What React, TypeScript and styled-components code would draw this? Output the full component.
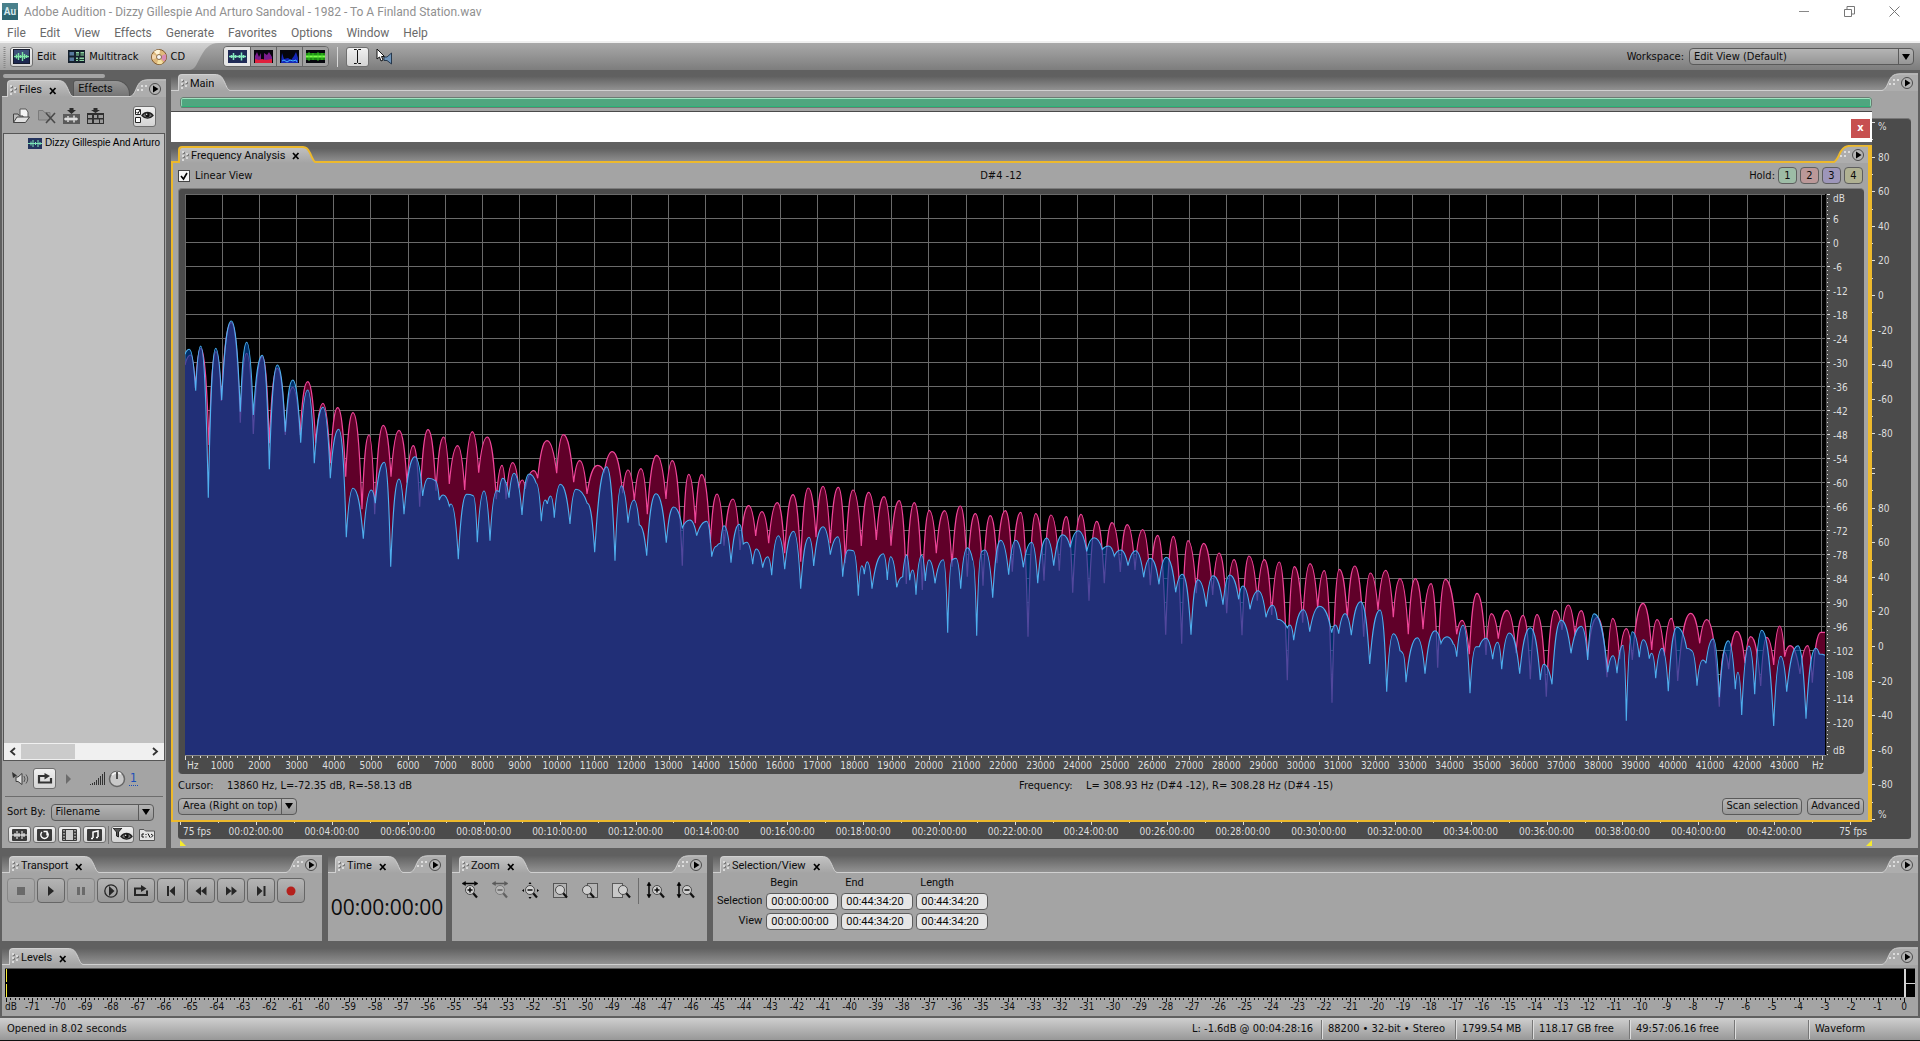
import React from 'react';
import styled, { createGlobalStyle, css } from 'styled-components';

const UI_FONT = '"DejaVu Sans Condensed", "DejaVu Sans", "Noto Sans", sans-serif';
const SYSTEM_FONT = 'Roboto, "Noto Sans", sans-serif';
const LIST_FONT = '"Liberation Sans", Arial, sans-serif';
const CLOCK_FONT = '"Open Sans", "Noto Sans", sans-serif';

const color = {
  panel: '#a4a4a4',
  well: '#4b4b4b',
  frame: '#606060',
  line: '#d0d0d0',
  focus: '#edb92c',
  ink: '#0c0c0c',
  scale: '#dedede',
};

const GlobalStyle = createGlobalStyle`
  * { box-sizing: border-box; }
  body { margin: 0; background: ${color.frame}; }
  button, input, select { font: inherit; color: inherit; margin: 0; }
  button { padding: 0; border: 0; background: none; cursor: default; }
  svg { display: block; flex: none; }
`;

/* ---------- shell ---------- */

const Shell = styled.div`
  display: flex;
  flex-direction: column;
  min-height: 100vh;
  background: ${color.frame};
  border-bottom: 1px solid #111;
  font: 11px/14px ${UI_FONT};
  color: ${color.ink};
`;

const TitleBar = styled.header`
  display: flex;
  align-items: center;
  gap: 6px;
  height: 22px;
  padding-left: 2px;
  background: #fff;
  font: 12px/16px ${SYSTEM_FONT};
  color: #909090;
`;

const AppTitle = styled.h1`
  flex: 1;
  margin: 0;
  padding-top: 1px;
  font: inherit;
`;

const CaptionButtons = styled.div`
  display: flex;
  gap: 34px;
  padding-right: 20px;
`;

const MenuBar = styled.nav`
  display: flex;
  align-items: center;
  gap: 14px;
  height: 21px;
  padding: 3px 0 0 7px;
  background: #fff;
  border-bottom: 2px solid #f0f0f0;
  font: 12px/16px ${SYSTEM_FONT};
  color: #6a6a6a;
`;

/* ---------- main toolbar ---------- */

const Toolbar = styled.div`
  display: flex;
  align-items: center;
  height: 27px;
  background: linear-gradient(#a9a9a9, #7d7d7d);
`;

const ModeGroup = styled.div`
  display: flex;
  align-items: center;
  align-self: stretch;
  gap: 12px;
  padding-left: 3px;
  background: linear-gradient(#d2d2d2, #a0a0a0);
`;

const ModeButton = styled.button`
  display: flex;
  align-items: center;
  gap: 4px;
`;

const IconWell = styled.span<{ $on?: boolean; $w?: number; $h?: number }>`
  display: flex;
  align-items: center;
  justify-content: center;
  width: ${p => p.$w ?? 23}px;
  height: ${p => p.$h ?? 20}px;
  border-radius: 3px;
  ${p =>
    p.$on &&
    css`
      background: linear-gradient(#f0f0f0, #d4d4d4);
      border: 1px solid #6f6f6f;
    `}
`;

const Spacer = styled.div`
  flex: 1;
`;

const ViewGroup = styled.div`
  display: flex;
  margin-left: 2px;
  border: 1px solid #666;
  border-radius: 4px;
  overflow: hidden;
`;

const ViewButton = styled.button<{ $on?: boolean }>`
  display: flex;
  align-items: center;
  justify-content: center;
  width: 26px;
  height: 19px;
  background: ${p => (p.$on ? '#e6e6e6' : '#a0a0a0')};
  & + & { border-left: 1px solid #666; }
`;

const ToolDivider = styled.span`
  width: 1px;
  height: 20px;
  margin: 0 8px;
  background: #d8d8d8;
`;

const ToolButton = styled.button`
  padding-left: 7px;
`;

const WorkspacePicker = styled.div`
  display: flex;
  align-items: center;
  gap: 5px;
  padding-right: 6px;
`;

/* ---------- select ---------- */

const SelectBox = styled.div<{ $w: number }>`
  display: grid;
  width: ${p => p.$w}px;
  height: 17px;
  border: 1px solid #5a5a5a;
  border-radius: 4px;
  background: linear-gradient(#b4b4b4, #969696);
  overflow: hidden;
`;

const NativeSelect = styled.select`
  grid-area: 1 / 1;
  appearance: none;
  min-width: 0;
  padding: 0 16px 0 4px;
  border: 0;
  outline: 0;
  background: transparent;
`;

const SelectArrow = styled.span`
  grid-area: 1 / 1;
  justify-self: end;
  display: flex;
  align-items: center;
  justify-content: center;
  width: 15px;
  border-left: 1px solid #5a5a5a;
  pointer-events: none;
`;

function Select({ id, width, options }: { id: string; width: number; options: string[] }) {
  return (
    <SelectBox $w={width}>
      <NativeSelect id={id} aria-label={id}>
        {options.map(o => (
          <option key={o}>{o}</option>
        ))}
      </NativeSelect>
      <SelectArrow>
        <svg width="8" height="6"><path d="M0 0H8L4 6Z" fill="#000" /></svg>
      </SelectArrow>
    </SelectBox>
  );
}

/* ---------- panels with tabs ---------- */

const Panel = styled.section<{ $grow?: boolean; $w?: number }>`
  display: flex;
  flex-direction: column;
  min-width: 0;
  ${p => (p.$grow ? 'flex: 1;' : '')}
  ${p => (p.$w ? `width: ${p.$w}px; flex: none;` : '')}
`;

const PanelBody = styled.div`
  flex: 1;
  display: flex;
  flex-direction: column;
  min-height: 0;
  background: ${color.panel};
`;

const Strip = styled.div<{ $h: number; $focus?: boolean; $plain?: boolean }>`
  display: flex;
  align-items: flex-end;
  height: ${p => p.$h}px;
  padding-left: ${p => (p.$plain ? 5 : 7)}px;
  background:
    linear-gradient(${p => (p.$focus ? color.focus : color.line)} 0 0) bottom / 100% ${p => (p.$focus ? 2 : 1)}px no-repeat,
    linear-gradient(${color.frame} 30%, ${p => (p.$plain ? color.frame : '#959595')});
`;

const TabFace = styled.div<{ $focus?: boolean }>`
  display: flex;
  align-items: center;
  gap: 2px;
  height: 17px;
  padding: ${p => (p.$focus ? 0 : 2)}px 0 0 2px;
  border-left: ${p => (p.$focus ? `2px solid ${color.focus}` : `1px solid ${color.line}`)};
  border-top: ${p => (p.$focus ? `2px solid ${color.focus}` : `1px solid ${color.line}`)};
  border-top-left-radius: 4px;
  background: linear-gradient(#c2c2c2, ${color.panel});
  font-family: ${SYSTEM_FONT};
  white-space: nowrap;
`;

const TabLabel = styled.span``;

const TabClose = styled.button`
  display: flex;
  align-items: center;
  padding: 1px 0 0 5px;
`;

const Corner = styled.button`
  margin-left: auto;
`;

const BackTab = styled.span`
  display: flex;
  align-items: center;
  justify-content: center;
  width: 68px;
  height: 16px;
  padding-right: 12px;
  margin-bottom: 1px;
  border: 1px solid #545454;
  border-bottom: 0;
  border-radius: 3px 14px 0 0;
  background: linear-gradient(#969696, #757575);
  font-family: ${SYSTEM_FONT};
`;

function Slope({ focus }: { focus?: boolean }) {
  const edge = 'C7 .5 8 3 10 7 C12.500 12 13 15.500 16 16.500';
  return (
    <svg width="16" height="17">
      <defs>
        <linearGradient id="slope" x2="0" y2="1">
          <stop stopColor="#c2c2c2" />
          <stop offset="1" stopColor={color.panel} />
        </linearGradient>
      </defs>
      <path d={`M0 17V.5${edge}V17Z`} fill="url(#slope)" />
      <path d={`M0 ${focus ? 1 : .5}${edge}`} fill="none" stroke={focus ? color.focus : color.line} strokeWidth={focus ? 2 : 1} />
    </svg>
  );
}

function PanelCorner({ focus, label }: { focus?: boolean; label: string }) {
  const edge = 'C4 16.500 5 12 7.500 7 C10 2 13 .8 19 .8';
  return (
    <Corner aria-label={`${label} panel menu`}>
      <svg width={focus ? 39 : 36} height="18">
        <path d={`M0 18V17.500${edge}H39V18Z`} fill="#adadad" />
        <path d={`M0 17.500${edge}H39`} fill="none" stroke={focus ? color.focus : color.line} strokeWidth={focus ? 2 : 1} />
        {focus && <path d="M37 0V18" stroke={color.focus} strokeWidth="4" />}
        <g fill="#dcdcdc">
          <path d="M7 10h2v2H7zM11 10h2v2H11zM11 6h2v2H11zM15 6h2v2H15z" />
        </g>
        <circle cx="25" cy="10" r="5.500" fill="#b4b4b4" stroke="#4c4c4c" />
        <path d="M23 6.500L28.500 10L23 13.500Z" fill="#000" />
      </svg>
    </Corner>
  );
}

function Tab({ title, focus, closable = true }: { title: string; focus?: boolean; closable?: boolean }) {
  return (
    <>
      <TabFace $focus={focus}>
        <svg width="7" height="12">
          <path d="M0 1h2v2H0zM0 5h2v2H0zM0 9h2v2H0zM4 3h2v2H4zM4 7h2v2H4z" fill="#dadada" />
          <path d="M2 2h1v2H1V3h1zM2 6h1v2H1V7h1zM6 4h1v2H5V5h1z" fill="#7b7b7b" />
        </svg>
        <TabLabel>{title}</TabLabel>
        {closable && (
          <TabClose aria-label={`Close ${title}`}>
            <svg width="8" height="8"><path d="M1 1L6.500 7M6.500 1L1 7" stroke="#000" strokeWidth="1.700" /></svg>
          </TabClose>
        )}
      </TabFace>
      <Slope focus={focus} />
    </>
  );
}

/* ---------- icons ---------- */

const wave = 'M1 5.500H15M3 4V7M5 2.500V8.500M7 4V7M9 4V7M11 2V9M13 4V7';

const EditIcon = () => (
  <svg width="17" height="15" viewBox="0 0 17 15">
    <rect width="17" height="15" fill="#1d2850" stroke="#111" />
    <rect y="1" x="1" width="15" height="5" fill="#3d5079" />
    <path d="M1 7.500H16M3.500 5.500V9.500M5.500 4V11M7.500 6V9M9.500 3V12M11.500 5V10M13.500 6V9" stroke="#7fe6a8" strokeWidth="1.400" />
  </svg>
);

const TracksIcon = () => (
  <svg width="17" height="13">
    <rect width="17" height="13" fill="#15202c" />
    <path d="M1.500 2H6V5.500H1.500zM1.500 7.500H6V11H1.500z" fill="#587a9e" />
    <path d="M8 2H11V5.500H8zM12.500 2H16V5.500H12.500zM8 7.500H10V11H8zM11.500 7.500H16V11H11.500z" fill="#8fd3a4" />
    <path d="M8 4H16M8 9.500H16" stroke="#1d4032" />
  </svg>
);

const DiscIcon = () => (
  <svg width="16" height="16">
    <circle cx="8" cy="8" r="7.500" fill="#dfb97c" stroke="#80592c" />
    <path d="M8 8L3 2.500A7 7 0 0 1 9 1Z" fill="#fff4d8" />
    <path d="M8 8L14.500 5A7 7 0 0 1 13.500 12.500Z" fill="#d88ab4" />
    <path d="M8 8L12 14A7 7 0 0 1 6 14.800Z" fill="#f6e3a4" />
    <path d="M8 8L1.500 10.500A7 7 0 0 1 1.500 5Z" fill="#f2d6b0" />
    <circle cx="8" cy="8" r="2.500" fill="#f5f5f5" stroke="#8b6b45" />
  </svg>
);

const ViewIcon = ({ kind }: { kind: 'wave' | 'spectral' | 'pan' | 'phase' }) => (
  <svg width="19" height="13">
    <rect width="19" height="13" fill={kind === 'wave' ? '#1f2a56' : '#05050c'} />
    {kind === 'wave' && (
      <path d="M1 6.500H18M3.500 5V8M5.500 3V10M7.500 5V8M11.500 5V8M13.500 2.500V10.500M15.500 5V8" stroke="#86ecc0" strokeWidth="1.500" />
    )}
    {kind === 'spectral' && (
      <>
        <path d="M1 13V6L3 2L5 7L7 3V13ZM10 13V3L13 5L15 2L18 7V13Z" fill="#7a1c8c" />
        <path d="M1 13V9L5 10L8 9L12 10L18 9V13Z" fill="#e0203c" />
      </>
    )}
    {kind === 'pan' && (
      <>
        <path d="M1 13L2 3L4 9L8 8L11 10L14 6L16 2L18 8V13Z" fill="#1427b8" />
        <path d="M2 11L4 10L7 12L10 10L13 11L16 10L17 12" stroke="#44b4ff" fill="none" />
      </>
    )}
    {kind === 'phase' && (
      <>
        <rect y="3" width="19" height="7" fill="#1b8a12" />
        <path d="M0 6.500H19" stroke="#7dff4d" strokeWidth="2" />
        <path d="M3 2V11M7 3V10M12 2V11M16 3V10" stroke="#3fd02a" strokeWidth=".8" />
      </>
    )}
  </svg>
);

const BeamIcon = () => (
  <svg width="9" height="15"><path d="M1 .5H3.500L4.500 1.500L5.500 .5H8M4.500 1.500V13.500M1 14.500H3.500L4.500 13.500L5.500 14.500H8" stroke="#111" fill="none" /></svg>
);

const ScrubIcon = () => (
  <svg width="18" height="17">
    <path d="M1 1V11L3.500 9L5 13L7 12L5.500 8.500H8.500Z" fill="#fff" stroke="#111" />
    <path d="M8 9H11L15.500 5V16L11 12.500H8Z" fill="#6e93b8" stroke="#26384c" />
  </svg>
);

const FolderIcon = () => (
  <svg width="19" height="16">
    <path d="M8 1H14L16 4V10H8Z" fill="#f4f4f4" stroke="#555" />
    <path d="M1.500 14.500V6H6L7.500 8H11V14.500Z" fill="#bcbcbc" stroke="#444" />
    <path d="M1.500 14.500L5 9H17.500L13.500 14.500Z" fill="#e0e0e0" stroke="#444" />
  </svg>
);

const CloseFileIcon = () => (
  <svg width="18" height="15">
    <path d="M.5 11V1.500H5L6.500 3.500H12V11Z" fill="#999" stroke="#7b7b7b" />
    <path d="M8 4L17 14M17 4L8 14" stroke="#4a4a4a" strokeWidth="1.600" />
  </svg>
);

const InsertWaveIcon = () => (
  <svg width="17" height="16">
    <path d="M6.500 0H10.500V2H13L8.500 6L4 2H6.500Z" fill="#2b2b2b" />
    <rect y="6" width="17" height="10" fill="#5a5a5a" />
    <path transform="translate(0 5.500)" d={wave} stroke="#fff" strokeWidth="1.200" />
  </svg>
);

const InsertTrackIcon = () => (
  <svg width="17" height="16">
    <path d="M6.500 0H10.500V2H13L8.500 5L4 2H6.500Z" fill="#2b2b2b" />
    <rect y="5" width="17" height="11" fill="#2e2e2e" />
    <path d="M1 7H5V10H1zM1 11.500H5V15H1zM7 7H10V10H7zM11.500 7H16V10H11.500zM7 11.500H12V15H7zM13 11.500H16V15H13z" fill="#9a9a9a" />
  </svg>
);

const Eye = ({ x = 0, y = 0 }: { x?: number; y?: number }) => (
  <g transform={`translate(${x} ${y})`}>
    <path d="M0 4.500C3 .5 8 .5 11 4.500C8 8 3 8 0 4.500Z" fill="#777" stroke="#222" strokeWidth="1.300" />
    <circle cx="5.500" cy="4" r="2.200" fill="#111" />
    <circle cx="4.700" cy="3.300" r=".7" fill="#fff" />
  </g>
);

const OptionsEyeIcon = () => (
  <svg width="19" height="16">
    <path d="M.5 1.500H5.500V6.500H.5zM.5 9.500H5.500V14.500H.5z" fill="#fff" stroke="#222" />
    <path d="M1.500 4L3 5.500L5 2" stroke="#000" fill="none" />
    <Eye x={7} y={3} />
  </svg>
);

const SpeakerIcon = () => (
  <svg width="17" height="14">
    <path d="M0 0L5 3.500L1 6Z" fill="#333" />
    <path d="M4 5H6L10 1.500V12.500L6 9.500H4Z" fill="#ddd" stroke="#3f3f3f" />
    <path d="M12 4Q14 7 12 10M14 2.500Q17.500 7 14 11.500" fill="none" stroke="#555" />
  </svg>
);

const LoopIcon = () => (
  <svg width="16" height="11"><path d="M9 3H2V9.500H14V5" fill="none" stroke="#333" strokeWidth="2.200" /><path d="M7.500 0L13 3L7.500 6.500Z" fill="#333" /></svg>
);

const BarsIcon = () => (
  <svg width="15" height="13">
    {[1, 2, 3, 5, 7, 9, 11, 13].map((h, i) => (
      <rect key={i} x={i * 2} y={13 - h} width="1" height={h} fill="#333" />
    ))}
  </svg>
);

const KnobIcon = () => (
  <svg width="18" height="18">
    <circle cx="9" cy="9" r="7.500" fill="#c9c9c9" stroke="#666" strokeWidth="1.500" />
    <path d="M4 5A7 7 0 0 1 13 4" stroke="#f2f2f2" fill="none" strokeWidth="2" />
    <path d="M9 2V9" stroke="#222" strokeWidth="1.500" />
  </svg>
);

const FilterGlyph = ({ kind }: { kind: 'audio' | 'loop' | 'video' | 'midi' }) => (
  <svg width="15" height="12">
    <rect width="15" height="12" rx="1" fill="#3a3a3a" />
    {kind === 'audio' && <path d="M0 6H15M3 4V8M5 2V10M7 4V8M10 2V10M12 4V8" stroke="#fff" />}
    {kind === 'loop' && <path d="M5 3A3.700 3.700 0 1 0 10 3M10 6.500V2.500H6.500" stroke="#fff" strokeWidth="1.400" fill="none" />}
    {kind === 'video' && (
      <>
        <rect x="4" y="1" width="7" height="10" fill="#ccc" />
        <path d="M2 1V11M13 1V11" stroke="#fff" strokeDasharray="1.500 1.500" />
      </>
    )}
    {kind === 'midi' && <path d="M6 9V3L11 2V8M4 9.500H6M9 8.500H11" stroke="#fff" strokeWidth="1.500" fill="none" />}
  </svg>
);

const FilterEyeIcon = () => (
  <svg width="20" height="14">
    <path d="M0 0H9L5.500 4V9L3.500 8V4Z" fill="#555" stroke="#222" />
    <Eye x={8} y={4} />
  </svg>
);

const PathIcon = () => (
  <svg width="17" height="14">
    <path d="M.5 12.500V1.500H5L6.500 3H15.500V12.500Z" fill="#e4e4e4" stroke="#555" />
    <path d="M5 6H3V9H5M7 6V7M7 8.500V9.500M9 5.500L11 9.500M12 6L14 7.500L12 9.500" stroke="#111" fill="none" />
  </svg>
);

type ZoomKind = 'inH' | 'outH' | 'full' | 'sel' | 'left' | 'right' | 'inV' | 'outV';

const ZoomIcon = ({ kind }: { kind: ZoomKind }) => {
  const cx = kind === 'inV' || kind === 'outV' ? 11 : kind === 'left' ? 6 : kind === 'right' ? 12 : 9;
  return (
    <svg width="20" height="20" opacity={kind === 'outH' ? 0.45 : 1}>
      {(kind === 'sel' || kind === 'left' || kind === 'right') && (
        <rect x={kind === 'left' ? 6.5 : kind === 'right' ? 1.5 : 2.5} y="2.500" width={kind === 'sel' ? 13 : 10} height="14" fill={kind === 'right' ? '#c8c8c8' : '#b4b4b4'} stroke="#000" strokeDasharray="1 1" />
      )}
      {(kind === 'inH' || kind === 'outH') && (
        <path d="M4 2H14V3H4ZM1 2.500L4.500 .5V4.500ZM17 2.500L13.500 .5V4.500Z" fill="#000" stroke="#000" strokeWidth=".5" />
      )}
      {(kind === 'inV' || kind === 'outV') && (
        <path d="M2.500 4V14H3.500V4ZM3 1L1 4.500H5ZM3 17L1 13.500H5Z" fill="#000" stroke="#000" strokeWidth=".5" />
      )}
      {kind === 'full' && <path d="M7.500 3L9 1L10.500 3ZM7.500 16L9 18L10.500 16ZM3 8L1 9.500L3 11ZM16 8L18 9.500L16 11Z" fill="#000" />}
      <path d={`M${cx + 3} 12L${cx + 7} 16.500`} stroke="#111" strokeWidth="2.200" />
      <circle cx={cx} cy="9" r="4.500" fill="#cfcfcf" stroke="#4a4a4a" />
      {kind !== 'sel' && kind !== 'left' && kind !== 'right' && <path d={`M${cx - 2.5} 9H${cx + 2.5}`} stroke="#000" strokeWidth="1.400" />}
      {(kind === 'inH' || kind === 'inV') && <path d={`M${cx} 6.500V11.500`} stroke="#000" strokeWidth="1.400" />}
    </svg>
  );
};

/* ---------- workspace ---------- */

const Workspace = styled.main`
  flex: 1;
  display: flex;
  gap: 5px;
  padding: 0 2px;
`;

const FilesPanel = styled(Panel)`
  padding-top: 4px;
`;

const DockGrip = styled.span`
  width: 102px;
  height: 4px;
  margin-left: 1px;
  border-radius: 2px;
  background: #a4a4a4;
`;

const FileTools = styled.div`
  display: flex;
  align-items: center;
  justify-content: space-between;
  height: 36px;
  padding: 2px 10px 0 10px;
`;

const FileToolSet = styled.div`
  display: flex;
  align-items: center;
  gap: 7px;
`;

const FileList = styled.ul`
  flex: 1;
  margin: 0 1px;
  padding: 2px 0;
  list-style: none;
  border: 1px solid #565656;
  border-bottom: 0;
  background: #c1c1c1;
  overflow: hidden;
`;

const FileItem = styled.li`
  display: flex;
  align-items: center;
  gap: 3px;
  height: 14px;
  padding-left: 24px;
  font: 10px/14px ${LIST_FONT};
  color: #000;
  white-space: nowrap;
`;

const ListScroll = styled.div`
  display: grid;
  grid-template-columns: 17px 54px 1fr 17px;
  align-items: center;
  justify-items: center;
  height: 18px;
  margin: 0 1px;
  border: 1px solid #565656;
  border-top: 0;
  background: #f0f0f0;
`;

const ScrollThumb = styled.span`
  justify-self: stretch;
  height: 15px;
  background: #cbcbcb;
`;

const PreviewRow = styled.div`
  display: flex;
  align-items: center;
  height: 36px;
  margin: 0 3px;
  padding-left: 7px;
  gap: 4px;
  border-bottom: 1px solid #6d6d6d;
`;

const VolumeGroup = styled.div`
  display: flex;
  align-items: center;
  gap: 3px;
  padding-left: 9px;
`;

const VolumeValue = styled.a`
  color: #1a4fb8;
  text-decoration: none;
  border-bottom: 1px dotted #1a4fb8;
  padding: 0 1px;
  font-size: 12px;
`;

const SortRow = styled.div`
  display: flex;
  align-items: center;
  gap: 5px;
  height: 29px;
  padding: 1px 0 0 5px;
`;

const FilterRow = styled.div`
  display: flex;
  align-items: flex-start;
  gap: 2px;
  height: 22px;
  padding-left: 6px;
`;

const FilterRule = styled.span`
  width: 1px;
  height: 18px;
  background: #777;
`;

/* ---------- editor ---------- */

const EditorBody = styled(PanelBody)`
  position: relative;
  padding: 6px 7px 9px 7px;
`;

const RangeBar = styled.div`
  height: 11px;
  margin: 0 39px 10px 2px;
  border: 2px solid #9be0bd;
  border-color: #9fe3c0 #8fd8b4 #2bb578;
  border-radius: 3px;
  outline: 1px solid #6c7a72;
  outline-offset: -1px;
  background: #4fa67f;
`;

const Display = styled.div`
  flex: 1;
  display: grid;
  grid-template: 1fr 17px / 1fr 39px;
  padding-left: 2px;
  background: ${color.well};
  border-radius: 0 4px 3px 3px;
  border-top: 1px solid #777;
`;

const AmplitudeScale = styled.div`
  grid-column: 2;
  display: flex;
  flex-direction: column;
  gap: 5px;
  padding: 3px 0;
`;

const ScaleSvg = styled.svg`
  width: 100%;
  height: 100%;
  min-height: 0;
  flex: 1;
  overflow: visible;
  font: 10px ${UI_FONT};
  shape-rendering: crispEdges;
`;

const Marker = styled.div`
  position: absolute;
  bottom: 2px;
  left: 9px;
  right: 46px;
  display: flex;
  justify-content: space-between;
`;

const FloatWindow = styled.section`
  position: absolute;
  top: 20px;
  left: 0;
  right: 46px;
  bottom: 26px;
  display: flex;
  flex-direction: column;
  border-top: 1px solid #4a4a4a;
`;

const FloatCaption = styled.div`
  display: flex;
  justify-content: flex-end;
  align-items: center;
  height: 30px;
  padding: 2px 2px 0;
  background: #fff;
`;

const FloatClose = styled.button`
  width: 19px;
  height: 19px;
  background: #c75050;
  color: #fff;
  font-weight: bold;
  line-height: 16px;
`;

const AnalysisBody = styled.div`
  flex: 1;
  display: flex;
  flex-direction: column;
  min-height: 0;
  border: solid ${color.focus};
  border-width: 0 4px 2px 2px;
  padding: 0 4px 5px 5px;
  background: ${color.panel};
`;

const AnalysisHead = styled.div`
  display: grid;
  grid-template-columns: 1fr auto 1fr;
  align-items: center;
  height: 25px;
`;

const NoteReadout = styled.span`
  margin-right: 40px;
`;

const CheckLabel = styled.label`
  display: flex;
  align-items: center;
  gap: 5px;
`;

const CheckBox = styled.span`
  display: grid;
  width: 12px;
  height: 12px;
  svg { grid-area: 1 / 1; pointer-events: none; }
`;

const CheckInput = styled.input`
  grid-area: 1 / 1;
  appearance: none;
  width: 12px;
  height: 12px;
  border: 1px solid #444;
  background: #f4f4f4;
`;

const HoldGroup = styled.div`
  display: flex;
  align-items: center;
  justify-content: flex-end;
  gap: 3px;
  padding-right: 1px;
`;

const HoldButton = styled.button<{ $tint: string }>`
  width: 19px;
  height: 17px;
  border: 1px solid #5e5e5e;
  border-radius: 4px;
  background: ${p => p.$tint};
`;

const ChartFrame = styled.div`
  flex: 1;
  display: grid;
  grid-template: minmax(0, 1fr) 19px / minmax(0, 1fr) 38px;
  min-height: 0;
  padding: 5px 0 0 6px;
  border: 1px solid #7c7c7c;
  border-width: 1px 0 0 1px;
  border-radius: 4px;
  background: ${color.well};
`;

const Plot = styled.svg`
  width: 100%;
  height: 100%;
  min-height: 0;
  background: #000;
`;

const ReadoutRow = styled.div`
  display: grid;
  grid-template-columns: 49px 792px 67px 1fr;
  align-items: center;
  height: 23px;
`;

const ActionRow = styled.div`
  display: flex;
  align-items: center;
  gap: 5px;
  height: 18px;
`;

const PushButton = styled.button`
  height: 17px;
  padding: 0 3px;
  border: 1px solid #5a5a5a;
  border-radius: 4px;
  background: linear-gradient(#b8b8b8, #989898);
`;

/* ---------- spectrum data ---------- */

type Point = [number, number];

/* Every run is listed in thirds of a plot unit, relative to its own origin. */
const run = (ox: number, oy: number, flat: number[]): Point[] => {
  const out: Point[] = [];
  for (let i = 0; i < flat.length; i += 2) out.push([ox + flat[i] / 3, oy + flat[i + 1] / 3]);
  return out;
};

const leftChannel: Point[] = [
  ...run(-15, 106, [
    45, 163, 58, 148, 77, 272, 92, 138, 115, 593, 137, 145, 155, 300, 184, 63, 211, 335, 230, 127, 250, 345, 277, 166,
    298, 508, 322, 195, 346, 395, 368, 240, 392, 428, 413, 270, 433, 490, 459, 322, 481, 535, 506, 388, 529, 712, 549, 565,
    580, 716, 604, 570, 616, 610, 643, 487, 662, 800, 687, 537, 702, 643, 735, 470, 758, 588, 775, 535, 796, 542, 808, 600,
    820, 585, 838, 618, 843, 612, 865, 778, 890, 583, 910, 587, 922, 727, 942, 573, 960, 722, 980, 572, 988, 575, 998, 535,
    1017, 593, 1032, 520, 1056, 645, 1077, 522, 1098, 548, 1114, 664, 1125, 600, 1132, 612, 1142, 588, 1153, 653, 1171, 553,
    1200, 672, 1218, 568, 1252, 610, 1274, 757, 1310, 500,
  ]),
  ...run(415, 206, [
    45, 482, 64, 257, 84, 368, 102, 300, 118, 375, 140, 467, 168, 281, 199, 428, 221, 321, 247, 383, 270, 360, 290, 407,
    320, 364, 335, 470, 350, 438, 362, 430, 372, 377, 393, 488, 418, 373, 430, 432, 440, 427, 458, 493, 469, 447, 488, 503,
    503, 470, 515, 526, 535, 407, 554, 508, 581, 394, 602, 566, 627, 412, 641, 498, 669, 380, 691, 464, 714, 410, 728, 530,
    745, 450, 760, 452, 775, 587, 785, 497, 793, 523, 802, 485, 816, 566, 850, 461, 862, 540, 872, 470, 890, 562, 908, 530,
    920, 466, 929, 541, 938, 510, 948, 584, 965, 466, 976, 543, 987, 480, 1005, 550, 1030, 479, 1043, 698, 1056, 480,
    1068, 475, 1082, 566, 1102, 443, 1118, 480, 1130, 707, 1145, 455, 1155, 450, 1178, 593, 1202, 421, 1226, 524, 1247, 421,
    1270, 502, 1295, 427, 1313, 550,
  ]),
  ...run(855, 286, [
    20, 174, 41, 257, 68, 164, 91, 202, 115, 152, 140, 214, 162, 173, 187, 208, 206, 198, 223, 228, 242, 210, 264, 257,
    287, 212, 311, 292, 331, 235, 357, 313, 379, 232, 407, 337, 427, 283, 453, 464, 474, 299, 499, 380, 519, 287, 549, 374,
    569, 285, 596, 358, 608, 318, 630, 388, 655, 332, 678, 412, 698, 376, 712, 418, 742, 443, 750, 435, 761, 481, 790, 389,
    809, 455, 839, 379, 875, 458, 886, 435, 896, 461, 915, 401, 934, 466, 962, 365, 989, 552, 1020, 390, 1040, 635,
    1060, 461, 1080, 512, 1088, 520, 1098, 607, 1132, 473, 1155, 581, 1185, 452,
  ]),
  ...run(1255, 346, [
    3, 310, 21, 290, 40, 312, 50, 350, 69, 256, 90, 460, 108, 320, 118, 320, 138, 295, 158, 358, 173, 307, 185, 388, 208, 279,
    239, 401, 271, 263, 301, 420, 311, 373, 336, 433, 363, 241, 393, 340, 424, 259, 443, 360, 462, 221, 503, 397, 519, 347,
    531, 400, 549, 316, 559, 542, 577, 275, 598, 352, 610, 299, 628, 356, 635, 340, 647, 415, 666, 325, 685, 454, 711, 262,
    740, 325, 755, 332, 771, 437, 788, 360, 798, 370, 820, 296, 838, 472, 865, 302, 886, 448, 894, 397, 905, 525, 927, 318,
    944, 463, 965, 271, 1001, 558, 1022, 349, 1040, 455, 1074, 317, 1098, 536, 1127, 325, 1138, 342, 1155, 346,
  ]),
];

const rightChannel: Point[] = [
  ...run(-15, 106, [
    45, 195, 62, 165, 76, 265, 92, 145, 117, 435, 138, 155, 154, 303, 184, 68, 211, 368, 230, 160, 250, 402, 277, 170,
    298, 430, 322, 205, 346, 405, 368, 262, 390, 405, 413, 245, 437, 430, 459, 310, 481, 490, 503, 323, 527, 530, 549, 338,
    576, 628, 597, 405, 614, 643, 640, 376, 663, 530, 687, 391, 711, 548, 730, 437, 749, 620, 774, 389, 798, 572, 821, 411,
    838, 552, 863, 437, 884, 570, 907, 395, 926, 518, 952, 411, 979, 598, 996, 496, 1008, 598, 1028, 488, 1046, 565,
    1057, 540, 1066, 567, 1091, 512, 1103, 535, 1131, 422, 1160, 520, 1180, 404, 1211, 547, 1229, 482, 1251, 582, 1283, 496,
    1303, 515, 1327, 455,
  ]),
  ...run(415, 206, [
    68, 280, 84, 210, 103, 302, 123, 206, 142, 343, 170, 166, 198, 297, 217, 182, 247, 497, 266, 223, 286, 370, 305, 224,
    331, 428, 351, 282, 372, 437, 399, 297, 420, 450, 446, 317, 467, 408, 486, 335, 506, 430, 532, 308, 554, 460, 579, 284,
    602, 485, 625, 264, 648, 412, 669, 259, 691, 430, 715, 262, 736, 490, 759, 270, 784, 438, 806, 277, 829, 420, 852, 290,
    873, 437, 898, 302, 919, 552, 943, 308, 967, 570, 988, 331, 1009, 460, 1034, 332, 1056, 500, 1081, 318, 1102, 530,
    1126, 341, 1149, 557, 1171, 347, 1191, 490, 1216, 332, 1237, 515, 1262, 337, 1284, 710, 1307, 341,
  ]),
  ...run(855, 286, [
    12, 302, 33, 105, 58, 272, 79, 110, 98, 338, 123, 103, 147, 362, 170, 124, 193, 310, 216, 128, 241, 276, 262, 134,
    285, 270, 308, 149, 331, 316, 353, 166, 377, 464, 400, 169, 425, 491, 444, 182, 469, 340, 491, 190, 518, 345, 537, 219,
    560, 400, 582, 239, 606, 466, 627, 228, 652, 362, 673, 239, 695, 405, 718, 246, 742, 601, 763, 260, 788, 428, 810, 251,
    833, 385, 853, 272, 876, 668, 898, 268, 922, 415, 944, 258, 971, 470, 991, 279, 1014, 390, 1037, 271, 1060, 412,
    1080, 296, 1105, 463, 1126, 296, 1149, 448, 1173, 311, 1193, 563, 1216, 298,
  ]),
  ...run(1255, 346, [
    50, 283, 66, 241, 88, 343, 111, 160, 138, 345, 154, 221, 175, 296, 201, 211, 228, 340, 249, 226, 271, 418, 291, 224,
    319, 470, 345, 211, 366, 270, 385, 195, 405, 287, 424, 212, 443, 350, 472, 232, 501, 412, 518, 235, 539, 358, 559, 266,
    577, 360, 609, 190, 635, 330, 651, 239, 673, 347, 694, 235, 713, 423, 752, 220, 779, 310, 800, 239, 838, 500, 852, 335,
    866, 388, 890, 274, 915, 370, 932, 290, 962, 438, 980, 292, 1001, 375, 1019, 258, 1034, 350, 1050, 317, 1080, 402,
    1103, 317, 1117, 428, 1142, 277, 1155, 277,
  ]),
];

/* Lobes are round at the crest and pinched at the notch. */
const curve = (points: Point[]) =>
  points.reduce((d, [x, y], i) => {
    if (i === 0) return `M${x.toFixed(1)} ${y.toFixed(1)}`;
    const [px, py] = points[i - 1];
    const dx = x - px;
    const dy = y - py;
    const c = y < py
      ? [px + 0.25 * dx, py + 0.6 * dy, px + 0.52 * dx, y]
      : [px + 0.48 * dx, py, px + 0.75 * dx, py + 0.4 * dy];
    return `${d}C${[...c, x, y].map(n => n.toFixed(1)).join(' ')}`;
  }, '');

const PLOT_W = 1641;
const PLOT_H = 561;
const HZ_MAX = 44120;
const DB_TOP = 12;
const DB_SPAN = 140.25;

const range = (n: number, from = 0) => Array.from({ length: n }, (_, i) => i + from);
const pct = (n: number) => `${(n * 100).toFixed(3)}%`;
const hzAt = (hz: number) => hz / HZ_MAX;
const dbAt = (db: number) => (DB_TOP - db) / DB_SPAN;

function Spectrum() {
  const left = curve(leftChannel);
  const right = curve(rightChannel);
  const close = `V${PLOT_H}H0Z`;
  return (
    <Plot viewBox={`0 0 ${PLOT_W} ${PLOT_H}`} preserveAspectRatio="none" role="img" aria-label="Frequency spectrum">
      <g stroke="#6a6a6a" shapeRendering="crispEdges">
        <path d={`M0 .5H${PLOT_W}M.5 0V${PLOT_H}`} />
        {range(22).map(i => {
          const y = Math.floor(dbAt(6 - i * 6) * PLOT_H) + 0.5;
          return <path key={`h${i}`} d={`M0 ${y}H${PLOT_W}`} />;
        })}
        {range(44, 1).map(k => {
          const x = Math.floor(hzAt(k * 1000) * PLOT_W) + 0.5;
          return <path key={`v${k}`} d={`M${x} 0V${PLOT_H}`} />;
        })}
      </g>
      <path d={right + close} fill="#600029" />
      <path d={right} fill="none" stroke="#f0469a" strokeWidth="1.200" />
      <path d={left + close} fill="#0047a0" fillOpacity=".66" />
      <path d={left} fill="none" stroke="#4fb8f8" strokeWidth="1.100" strokeOpacity=".95" />
      <path d={`M${PLOT_W - .5} 0V${PLOT_H}`} stroke="#000" />
    </Plot>
  );
}

function FrequencyScale() {
  return (
    <ScaleSvg fill={color.scale} stroke="none">
      <rect width="100%" height="1" fill="#8a8a8a" />
      {range(221).map(i => (
        <rect key={i} x={pct(hzAt(i * 200))} y="1" width="1" height={i % 5 ? 2 : 4} />
      ))}
      <text x="2" y="14">Hz</text>
      {range(43, 1).map(k => (
        <text key={k} x={pct(hzAt(k * 1000))} y="14" textAnchor="middle">{k * 1000}</text>
      ))}
      <text x={pct(hzAt(43900))} y="14" textAnchor="middle">Hz</text>
    </ScaleSvg>
  );
}

function DecibelScale() {
  return (
    <ScaleSvg fill={color.scale}>
      {range(141).map(i => (
        <rect key={i} x="1" y={pct(dbAt(12 - i))} width={i % 6 ? 1 : 3} height="1" />
      ))}
      <text x="7" y="8">dB</text>
      {range(22).map(i => (
        <text key={i} x="7" y={pct(dbAt(6 - i * 6))} dy="5">{6 - i * 6}</text>
      ))}
      <text x="7" y="100%" dy="-1">dB</text>
    </ScaleSvg>
  );
}

function ChannelScale({ first }: { first?: boolean }) {
  return (
    <ScaleSvg fill={color.scale}>
      {range(21).map(i => (
        <rect key={i} x="0" y={pct(i / 20)} width={i % 2 ? 1 : 3} height="1" />
      ))}
      {first && <text x="6" y="8">%</text>}
      {range(9).map(i => (
        <text key={i} x="6" y={pct((i + 1) / 10)} dy="4">{80 - i * 20}</text>
      ))}
      {!first && <text x="6" y="100%" dy="-1">%</text>}
    </ScaleSvg>
  );
}

const SESSION_MIN = 44.573;

function TimeScale() {
  return (
    <ScaleSvg fill={color.scale}>
      {range(45).map(m => (
        <rect key={m} x={pct(m / SESSION_MIN)} y="0" width="1" height={m % 2 ? 1 : 3} />
      ))}
      <text x="3" y="13">75 fps</text>
      {range(21, 1).map(i => (
        <text key={i} x={pct((i * 2) / SESSION_MIN)} y="13" textAnchor="middle">
          {`00:${String(i * 2).padStart(2, '0')}:00:00`}
        </text>
      ))}
      <text x="100%" dx="-5" y="13" textAnchor="end">75 fps</text>
    </ScaleSvg>
  );
}

/* ---------- lower docks ---------- */

const LowerDock = styled.div`
  display: flex;
  gap: 6px;
  height: 93px;
  padding: 0 2px;
`;

const TransportRow = styled.div`
  display: flex;
  gap: 2px;
  padding: 5px 5px;
`;

const TransportButton = styled.button<{ $off?: boolean }>`
  display: flex;
  align-items: center;
  justify-content: center;
  width: 28px;
  height: 25px;
  border: 1px solid #666;
  border-radius: 4px;
  background: linear-gradient(#b4b4b4, #989898);
  opacity: ${p => (p.$off ? 0.45 : 1)};
`;

const TimeReadout = styled.output`
  flex: 1;
  display: flex;
  align-items: center;
  justify-content: center;
  font: 21px/24px ${CLOCK_FONT};
  white-space: nowrap;
`;

const ZoomRow = styled.div`
  display: flex;
  align-items: center;
  gap: 10px;
  padding: 5px 9px;
`;

const ZoomRule = styled.span`
  width: 1px;
  height: 26px;
  margin: 0 -3px;
  background: #6d6d6d;
`;

const RangeTable = styled.table`
  align-self: flex-start;
  margin: 2px 0 0 4px;
  border-spacing: 0;
  th { padding: 0 4px 0 0; font: 11px/14px ${SYSTEM_FONT}; text-align: right; height: 20px; }
  thead th { text-align: left; padding-left: 4px; height: 16px; }
  td { padding: 0 3px 0 0; }
`;

const TimeInput = styled.input`
  display: block;
  width: 72px;
  height: 17px;
  padding: 0 4px;
  border: 1px solid #5c5c5c;
  border-radius: 4px;
  background: #e6e6e6;
  font-family: ${SYSTEM_FONT};
`;

const LevelsPanel = styled(Panel)`
  margin: 0 2px 2px;
`;

const LevelsBody = styled(PanelBody)`
  padding: 3px 3px 0 3px;
`;

const MeterRow = styled.div`
  display: grid;
  grid-template-columns: 1fr 9px;
  gap: 2px;
  height: 29px;
  border-top: 1px solid #555;
  background: #d4d4d4;
`;

const Meter = styled.div`
  display: grid;
  grid-template-rows: 1fr 1fr;
  gap: 2px;
  padding-left: 1px;
  background: #000;
`;

const MeterFloor = styled.span`
  width: 1px;
  background: #f4e838;
`;

const ClipLights = styled.div`
  display: grid;
  grid-template-rows: 1fr 1fr;
  gap: 1px;
`;

const ClipLight = styled.button`
  background: #000;
`;

const LevelScaleBox = styled.div`
  height: 19px;
  padding: 0 11px 0 1px;
`;

function LevelScale() {
  return (
    <ScaleSvg fill="#111">
      {range(433).map(i => (
        <rect key={i} x={pct(i / 432)} y="1" width="1" height={i % 6 ? 2 : 4} />
      ))}
      <text x="-1" y="13">dB</text>
      {range(72, 1).map(i => (
        <text key={i} x={pct(i / 72)} y="13" textAnchor="middle">{i - 72}</text>
      ))}
    </ScaleSvg>
  );
}

const StatusBar = styled.footer`
  display: flex;
  align-items: center;
  height: 22px;
  padding-left: 7px;
  background: linear-gradient(#cfcfcf, #989898);
`;

const StatusCell = styled.span<{ $w: number }>`
  display: flex;
  align-items: center;
  width: ${p => p.$w}px;
  height: 19px;
  padding-left: 6px;
  border-left: 1px solid #777;
  box-shadow: inset 1px 0 #dedede;
  white-space: nowrap;
`;

const StatusNote = styled.span`
  margin-left: auto;
  padding-right: 8px;
`;

const ink = '#262626';
const transport = [
  { name: 'Stop', off: true, art: <path d="M4 4H12V12H4Z" fill={ink} /> },
  { name: 'Play', art: <path d="M5 3L11 8L5 13Z" fill={ink} /> },
  { name: 'Pause', off: true, art: <path d="M4 4H7V12H4ZM9 4H12V12H9Z" fill={ink} /> },
  {
    name: 'Play to end',
    art: (
      <>
        <circle cx="8" cy="8" r="6.200" fill="none" stroke={ink} strokeWidth="1.300" />
        <path d="M6 3L11.500 8L6 13Z" fill={ink} />
      </>
    ),
  },
  {
    name: 'Play looped',
    art: (
      <>
        <path d="M9 5.500H2V12H14V7.500" fill="none" stroke={ink} strokeWidth="2" />
        <path d="M8 2L13.500 5.500L8 9Z" fill={ink} />
      </>
    ),
  },
  { name: 'Go to beginning', art: <path d="M4 3H6V13H4ZM12 3V13L6.500 8Z" fill={ink} /> },
  { name: 'Rewind', art: <path d="M8 3.500V12.500L2.500 8ZM13.500 3.500V12.500L8 8Z" fill={ink} /> },
  { name: 'Fast forward', art: <path d="M3 3.500L8.500 8L3 12.500ZM8.500 3.500L14 8L8.500 12.500Z" fill={ink} /> },
  { name: 'Go to end', art: <path d="M4 3L9.500 8L4 13ZM10.500 3H12.500V13H10.500Z" fill={ink} /> },
  { name: 'Record', art: <circle cx="8" cy="8" r="4.500" fill="#b5201c" /> },
];

const zoomTools: ZoomKind[] = ['inH', 'outH', 'full', 'sel', 'left', 'right', 'inV', 'outV'];

export default function App() {
  return (
    <Shell>
      <GlobalStyle />
      <TitleBar>
        <svg width="16" height="17">
          <rect width="16" height="17" fill="#2f6571" />
          <rect width="16" height="7" fill="#49808b" />
          <text x="8" y="12" textAnchor="middle" fontSize="10" fontWeight="bold" fill="#d4e8ec">Au</text>
        </svg>
        <AppTitle>Adobe Audition - Dizzy Gillespie And Arturo Sandoval - 1982 - To A Finland Station.wav</AppTitle>
        <CaptionButtons>
          <button aria-label="Minimize"><svg width="11" height="11"><path d="M0 5.500H10" stroke="#888" /></svg></button>
          <button aria-label="Restore"><svg width="11" height="11"><path d="M.5 3.500H7.500V10.500H.5ZM3 3.500V.5H10.500V8H7.500" fill="none" stroke="#777" /></svg></button>
          <button aria-label="Close"><svg width="11" height="11"><path d="M.5 .5L10.500 10.500M10.500 .5L.5 10.500" stroke="#777" /></svg></button>
        </CaptionButtons>
      </TitleBar>
      <MenuBar>
        {['File', 'Edit', 'View', 'Effects', 'Generate', 'Favorites', 'Options', 'Window', 'Help'].map(m => (
          <button key={m}>{m}</button>
        ))}
      </MenuBar>

      <Toolbar>
        <ModeGroup>
          <ModeButton>
            <svg width="3" height="22"><path d="M1.500 1V22" stroke="#888" strokeDasharray="1 1" strokeWidth="2" /></svg>
            <IconWell $on><EditIcon /></IconWell>Edit
          </ModeButton>
          <ModeButton><TracksIcon />Multitrack</ModeButton>
          <ModeButton><DiscIcon />CD</ModeButton>
        </ModeGroup>
        <svg width="36" height="27">
          <defs>
            <linearGradient id="mode" x2="0" y2="1"><stop stopColor="#d2d2d2" /><stop offset="1" stopColor="#a0a0a0" /></linearGradient>
          </defs>
          <path d="M0 0H34C24 0 20 6 16 13C11 22 10 27 4 27H0Z" fill="url(#mode)" />
        </svg>
        <ViewGroup>
          <ViewButton $on aria-label="Waveform view"><ViewIcon kind="wave" /></ViewButton>
          <ViewButton aria-label="Spectral frequency view"><ViewIcon kind="spectral" /></ViewButton>
          <ViewButton aria-label="Spectral pan view"><ViewIcon kind="pan" /></ViewButton>
          <ViewButton aria-label="Spectral phase view"><ViewIcon kind="phase" /></ViewButton>
        </ViewGroup>
        <ToolDivider />
        <button aria-label="Time selection tool"><IconWell $on><BeamIcon /></IconWell></button>
        <ToolButton aria-label="Scrub tool"><ScrubIcon /></ToolButton>
        <Spacer />
        <WorkspacePicker>
          <label htmlFor="workspace">Workspace:</label>
          <Select id="workspace" width={225} options={['Edit View (Default)']} />
        </WorkspacePicker>
      </Toolbar>

      <Workspace>
        <FilesPanel $w={164}>
          <DockGrip />
          <Strip $h={19} $plain>
            <Tab title="Files" />
            <BackTab>Effects</BackTab>
            <PanelCorner label="Files" />
          </Strip>
          <PanelBody>
            <FileTools>
              <FileToolSet>
                <button aria-label="Import file"><FolderIcon /></button>
                <button aria-label="Close file"><CloseFileIcon /></button>
                <button aria-label="Insert into waveform"><InsertWaveIcon /></button>
                <button aria-label="Insert into multitrack"><InsertTrackIcon /></button>
              </FileToolSet>
              <button aria-label="Show options"><IconWell $on $h={21}><OptionsEyeIcon /></IconWell></button>
            </FileTools>
            <FileList>
              <FileItem>
                <svg width="14" height="11">
                  <rect width="14" height="11" fill="#24345e" />
                  <path d="M0 5.500H14M3 3.500V7.500M5 2V9M7.500 4V7M10 2V9M12 4V7" stroke="#7fe6b8" />
                </svg>
                Dizzy Gillespie And Arturo
              </FileItem>
            </FileList>
            <ListScroll>
              <svg width="7" height="9"><path d="M6 1L2 4.500L6 8" stroke="#333" strokeWidth="1.800" fill="none" /></svg>
              <ScrollThumb />
              <span />
              <svg width="7" height="9"><path d="M1 1L5 4.500L1 8" stroke="#333" strokeWidth="1.800" fill="none" /></svg>
            </ListScroll>
            <PreviewRow>
              <SpeakerIcon />
              <button aria-label="Loop preview"><IconWell $on $h={21}><LoopIcon /></IconWell></button>
              <svg width="17" height="10"><path d="M6 0L11 5L6 10Z" fill="#6c6c6c" /></svg>
              <VolumeGroup>
                <BarsIcon />
                <KnobIcon />
                <VolumeValue href="#volume">1</VolumeValue>
              </VolumeGroup>
            </PreviewRow>
            <SortRow>
              <label htmlFor="sort">Sort By:</label>
              <Select id="sort" width={103} options={['Filename']} />
            </SortRow>
            <FilterRow>
              {(['audio', 'loop', 'video', 'midi'] as const).map(k => (
                <button key={k} aria-label={`Show ${k} files`}><IconWell $on $h={17}><FilterGlyph kind={k} /></IconWell></button>
              ))}
              <FilterRule />
              <button aria-label="Show filters"><IconWell $on $h={17}><FilterEyeIcon /></IconWell></button>
              <button aria-label="Show paths"><IconWell $h={17}><PathIcon /></IconWell></button>
            </FilterRow>
          </PanelBody>
        </FilesPanel>

        <Panel $grow>
          <Strip $h={21}>
            <Tab title="Main" closable={false} />
            <PanelCorner label="Main" />
          </Strip>
          <EditorBody>
            <RangeBar />
            <Display>
              <AmplitudeScale>
                <ChannelScale first />
                <ChannelScale />
              </AmplitudeScale>
              <TimeScale />
            </Display>
            <Marker>
              <svg width="6" height="6"><path d="M0 0V6H6Z" fill="#f5ea2e" /></svg>
              <svg width="6" height="6"><path d="M6 0V6H0Z" fill="#f5ea2e" /></svg>
            </Marker>

            <FloatWindow>
              <FloatCaption>
                <FloatClose aria-label="Close window">x</FloatClose>
              </FloatCaption>
              <Strip $h={21} $focus>
                <Tab title="Frequency Analysis" focus />
                <PanelCorner label="Frequency Analysis" focus />
              </Strip>
              <AnalysisBody>
                <AnalysisHead>
                  <CheckLabel>
                    <CheckBox>
                      <CheckInput type="checkbox" defaultChecked />
                      <svg width="12" height="12"><path d="M3 6L5.500 9L9 3" fill="none" stroke="#000" strokeWidth="1.600" /></svg>
                    </CheckBox>
                    Linear View
                  </CheckLabel>
                  <NoteReadout>D#4 -12</NoteReadout>
                  <HoldGroup>
                    Hold:
                    <HoldButton $tint="#9dbca6">1</HoldButton>
                    <HoldButton $tint="#bb9898">2</HoldButton>
                    <HoldButton $tint="#9d96ba">3</HoldButton>
                    <HoldButton $tint="#b0b192">4</HoldButton>
                  </HoldGroup>
                </AnalysisHead>
                <ChartFrame>
                  <Spectrum />
                  <DecibelScale />
                  <FrequencyScale />
                </ChartFrame>
                <ReadoutRow>
                  <span>Cursor:</span>
                  <span>13860 Hz, L=-72.35 dB, R=-58.13 dB</span>
                  <span>Frequency:</span>
                  <span>L= 308.93 Hz (D#4 -12), R= 308.28 Hz (D#4 -15)</span>
                </ReadoutRow>
                <ActionRow>
                  <Select id="graph-style" width={119} options={['Area (Right on top)']} />
                  <Spacer />
                  <PushButton>Scan selection</PushButton>
                  <PushButton>Advanced</PushButton>
                </ActionRow>
              </AnalysisBody>
            </FloatWindow>
          </EditorBody>
        </Panel>
      </Workspace>

      <LowerDock>
        <Panel $w={320}>
          <Strip $h={25}><Tab title="Transport" /><PanelCorner label="Transport" /></Strip>
          <PanelBody>
            <TransportRow>
              {transport.map(t => (
                <TransportButton key={t.name} aria-label={t.name} $off={t.off}>
                  <svg width="16" height="16">{t.art}</svg>
                </TransportButton>
              ))}
            </TransportRow>
          </PanelBody>
        </Panel>
        <Panel $w={118}>
          <Strip $h={25}><Tab title="Time" /><PanelCorner label="Time" /></Strip>
          <PanelBody><TimeReadout>00:00:00:00</TimeReadout></PanelBody>
        </Panel>
        <Panel $w={255}>
          <Strip $h={25}><Tab title="Zoom" /><PanelCorner label="Zoom" /></Strip>
          <PanelBody>
            <ZoomRow>
              {zoomTools.map(k => (
                <React.Fragment key={k}>
                  {k === 'inV' && <ZoomRule />}
                  <button aria-label={`Zoom ${k}`}><ZoomIcon kind={k} /></button>
                </React.Fragment>
              ))}
            </ZoomRow>
          </PanelBody>
        </Panel>
        <Panel $grow>
          <Strip $h={25}><Tab title="Selection/View" /><PanelCorner label="Selection/View" /></Strip>
          <PanelBody>
            <RangeTable>
              <thead>
                <tr><th /><th scope="col">Begin</th><th scope="col">End</th><th scope="col">Length</th></tr>
              </thead>
              <tbody>
                {['Selection', 'View'].map(row => (
                  <tr key={row}>
                    <th scope="row">{row}</th>
                    <td><TimeInput aria-label={`${row} begin`} defaultValue="00:00:00:00" /></td>
                    <td><TimeInput aria-label={`${row} end`} defaultValue="00:44:34:20" /></td>
                    <td><TimeInput aria-label={`${row} length`} defaultValue="00:44:34:20" /></td>
                  </tr>
                ))}
              </tbody>
            </RangeTable>
          </PanelBody>
        </Panel>
      </LowerDock>

      <LevelsPanel>
        <Strip $h={24}><Tab title="Levels" /><PanelCorner label="Levels" /></Strip>
        <LevelsBody>
          <MeterRow>
            <Meter><MeterFloor /><MeterFloor /></Meter>
            <ClipLights><ClipLight aria-label="Left clip" /><ClipLight aria-label="Right clip" /></ClipLights>
          </MeterRow>
          <LevelScaleBox><LevelScale /></LevelScaleBox>
        </LevelsBody>
      </LevelsPanel>

      <StatusBar>
        <span>Opened in 8.02 seconds</span>
        <StatusNote>L: -1.6dB @ 00:04:28:16</StatusNote>
        <StatusCell $w={134}>88200 • 32-bit • Stereo</StatusCell>
        <StatusCell $w={77}>1799.54 MB</StatusCell>
        <StatusCell $w={97}>118.17 GB free</StatusCell>
        <StatusCell $w={105}>49:57:06.16 free</StatusCell>
        <StatusCell $w={74} />
        <StatusCell $w={112}>Waveform</StatusCell>
      </StatusBar>
    </Shell>
  );
}
